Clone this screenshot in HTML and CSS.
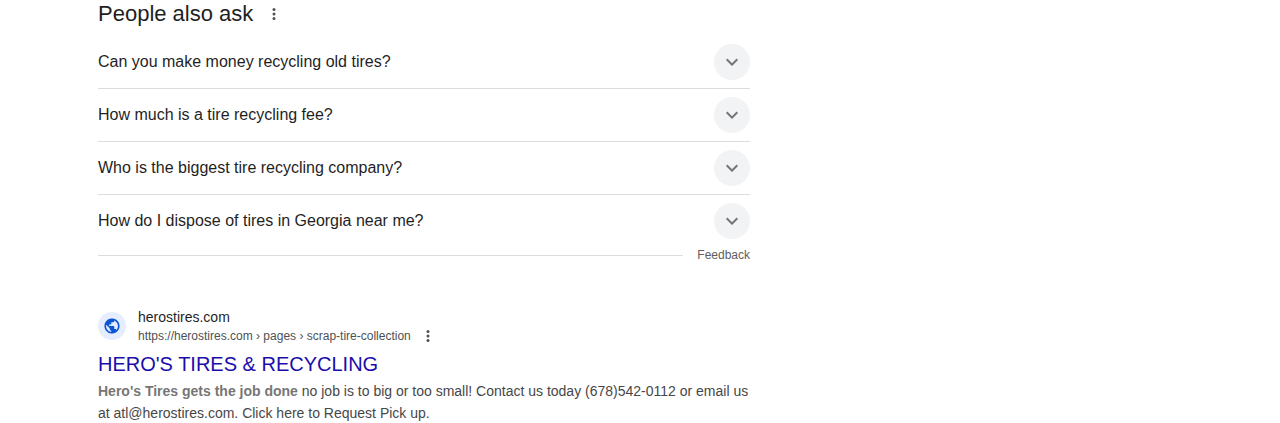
FILE: index.html
```html
<!DOCTYPE html>
<html lang="en">
<head>
<meta charset="utf-8">
<title>Search results</title>
<link rel="stylesheet" href="styles.css">
</head>
<body>
<main class="results">
  <section class="questions">
    <header class="questions-header">
      <h2 class="questions-title">People also ask</h2>
      <svg class="dots" viewBox="0 0 4 12"><circle cx="2" cy="1.5" r="1.5"/><circle cx="2" cy="6" r="1.5"/><circle cx="2" cy="10.5" r="1.5"/></svg>
    </header>
    <div class="question"><span>Can you make money recycling old tires?</span><span class="toggle"><svg viewBox="0 0 24 24"><path d="M7.41 8.59 12 13.17l4.59-4.58L18 10l-6 6-6-6z"/></svg></span></div>
    <div class="question"><span>How much is a tire recycling fee?</span><span class="toggle"><svg viewBox="0 0 24 24"><path d="M7.41 8.59 12 13.17l4.59-4.58L18 10l-6 6-6-6z"/></svg></span></div>
    <div class="question"><span>Who is the biggest tire recycling company?</span><span class="toggle"><svg viewBox="0 0 24 24"><path d="M7.41 8.59 12 13.17l4.59-4.58L18 10l-6 6-6-6z"/></svg></span></div>
    <div class="question"><span>How do I dispose of tires in Georgia near me?</span><span class="toggle"><svg viewBox="0 0 24 24"><path d="M7.41 8.59 12 13.17l4.59-4.58L18 10l-6 6-6-6z"/></svg></span></div>
    <div class="feedback"><span class="rule"></span><span>Feedback</span></div>
  </section>
  <article class="result">
    <div class="source">
      <span class="favicon"><svg viewBox="0 0 24 24"><path d="M12 2C6.48 2 2 6.48 2 12s4.48 10 10 10 10-4.48 10-10S17.52 2 12 2zM4 12c0-.61.08-1.21.21-1.78L8.99 15v1c0 1.1.9 2 2 2v1.93C7.06 19.43 4 16.07 4 12zm13.89 5.4c-.26-.81-1-1.4-1.9-1.4h-1v-3c0-.55-.45-1-1-1h-6v-2h2c.55 0 1-.45 1-1V7h2c1.1 0 2-.9 2-2v-.41C17.92 5.77 20 8.65 20 12c0 2.08-.81 3.98-2.11 5.4z"/></svg></span>
      <div>
        <div class="site">herostires.com</div>
        <div class="url"><span>https://herostires.com › pages › scrap-tire-collection</span><svg class="dots" viewBox="0 0 4 12"><circle cx="2" cy="1.5" r="1.5"/><circle cx="2" cy="6" r="1.5"/><circle cx="2" cy="10.5" r="1.5"/></svg></div>
      </div>
    </div>
    <h3 class="result-title">HERO'S TIRES &amp; RECYCLING</h3>
    <p class="snippet"><b>Hero's Tires gets the job done</b> no job is to big or too small! Contact us today (678)542-0112 or email us at atl@herostires.com. Click here to Request Pick up.</p>
  </article>
</main>
</body>
</html>
```
FILE: styles.css
```css
body { margin: 0; background: #fff; color: #1f1f1f; font-family: "Liberation Sans", Arial, sans-serif; overflow: hidden; }
.results { width: 652px; margin-left: 98px; }
.questions-header { display: flex; align-items: center; gap: 19px; height: 28px; margin-bottom: 8px; }
.questions-title { margin: 0; font-size: 22px; line-height: 28px; font-weight: 400; }
.dots { width: 4px; height: 12px; fill: #4d5156; }
.question { display: flex; align-items: center; justify-content: space-between; height: 52px; font-size: 16px; border-bottom: 1px solid #dadce0; }
.question:nth-last-child(2) { border-bottom: 0; }
.toggle { display: flex; align-items: center; justify-content: center; width: 36px; height: 36px; border-radius: 50%; background: #f1f3f4; }
.toggle svg { width: 24px; height: 24px; fill: #70757a; }
.feedback { display: flex; align-items: center; gap: 14px; height: 16px; font-size: 12px; line-height: 16px; color: #5e5e5e; }
.rule { flex: 1; height: 1px; background: #dadce0; }
.result { margin-top: 44px; }
.source { display: flex; align-items: center; gap: 12px; height: 38px; }
.favicon { display: flex; align-items: center; justify-content: center; width: 28px; height: 28px; border-radius: 50%; background: #e5edff; }
.favicon svg { width: 18px; height: 18px; fill: #0b57d0; stroke: #0b57d0; stroke-width: .15; }
.site { font-size: 14px; line-height: 20px; }
.url { display: flex; align-items: center; gap: 15px; font-size: 12px; line-height: 18px; color: #4d5156; }
.result-title { margin: 6px 0 3px; font-size: 20px; line-height: 26px; font-weight: 400; color: #1a0dab; }
.snippet { margin: 0; font-size: 14px; line-height: 22px; color: #474747; }
.snippet b { color: #767676; }
```
